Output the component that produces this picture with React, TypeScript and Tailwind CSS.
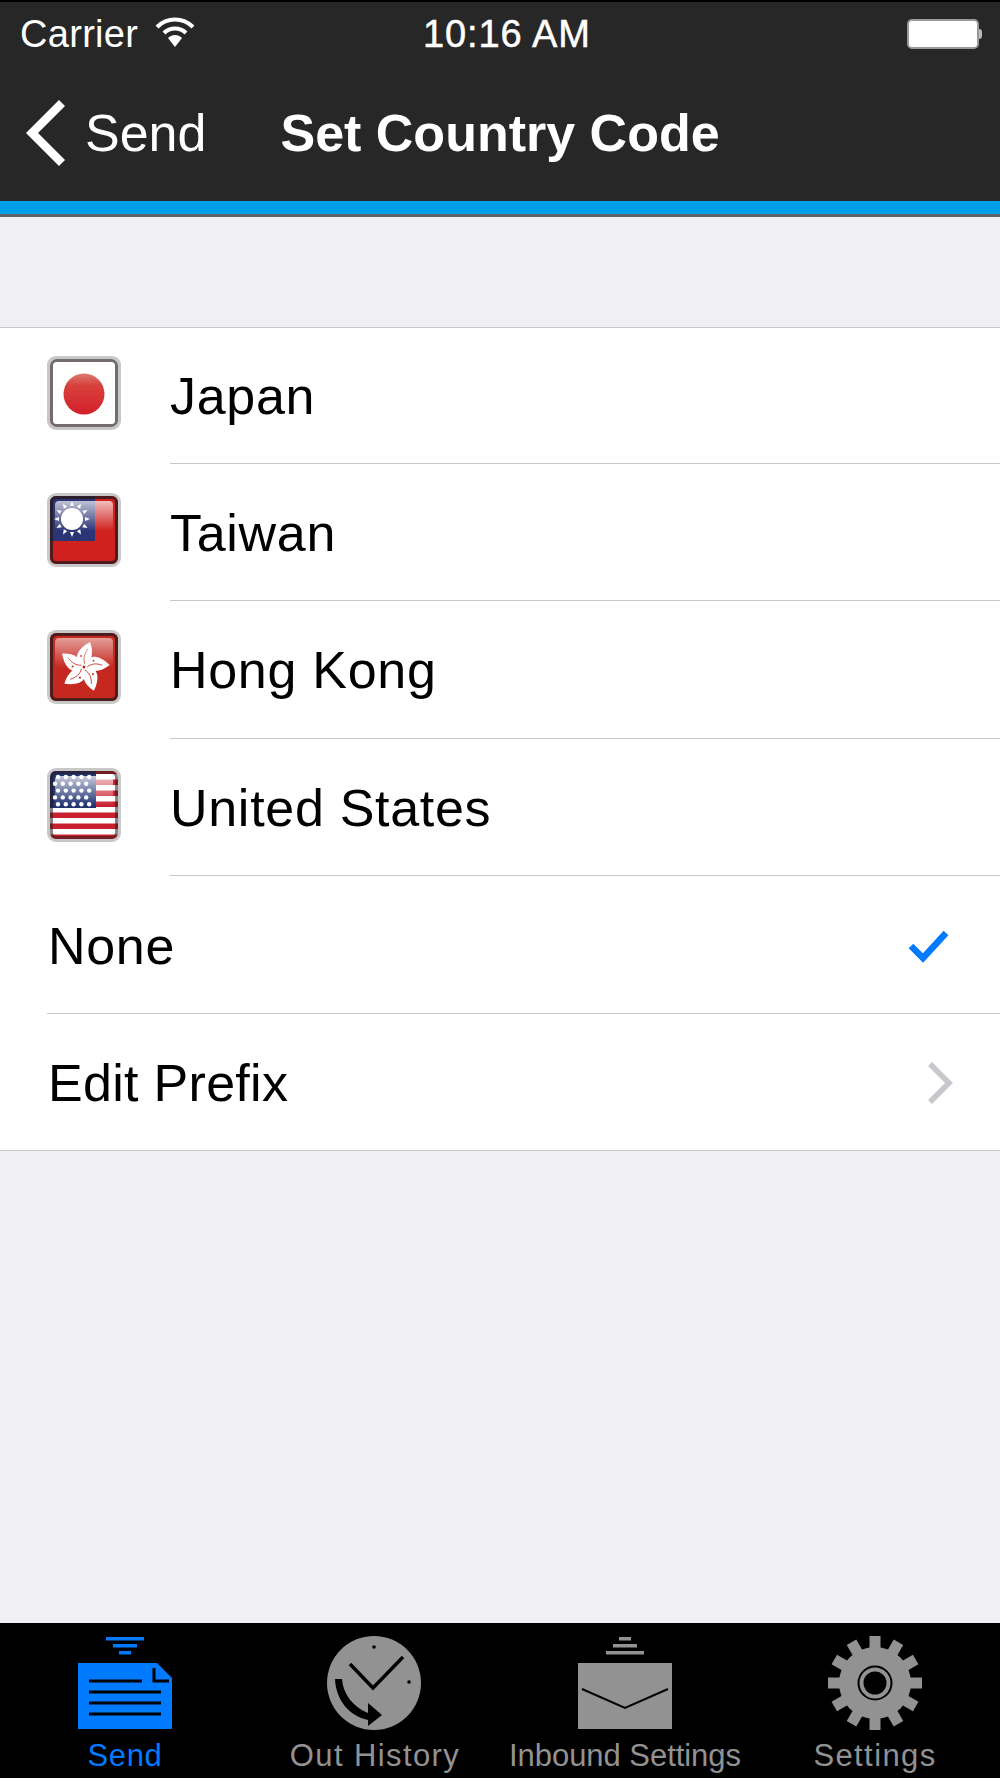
import type { ReactNode } from "react";

const FONT = "font-['Liberation_Sans',Arial,sans-serif]";

/** Rounded glossy frame shared by all four flags. */
function FlagFrame({ id, children, gloss = 0.7, edge = 0.8 }: { id: string; children: ReactNode; gloss?: number; edge?: number }) {
  return (
    <svg width="74" height="74" viewBox="0 0 74 74" className="mb-[6px] shrink-0 blur-[0.7px]">
      <defs>
        <clipPath id={`${id}-clip`}>
          <rect x="3" y="3" width="68" height="68" rx="6" />
        </clipPath>
        <linearGradient id={`${id}-gloss`} x1="0" y1="0" x2="0" y2="1">
          <stop offset="0" stopColor="#fff" stopOpacity={gloss} />
          <stop offset="1" stopColor="#fff" stopOpacity="0" />
        </linearGradient>
      </defs>
      <rect x="0" y="0" width="74" height="74" rx="9" fill="#c8c8c8" />
      <g clipPath={`url(#${id}-clip)`}>
        {children}
        <rect x="8" y="8" width="58" height="30" rx="4" fill={`url(#${id}-gloss)`} />
      </g>
      <rect x="4.5" y="4.5" width="65" height="65" rx="5" fill="none" stroke="#2a1c1c" strokeOpacity={edge} strokeWidth="3" />
    </svg>
  );
}

function JapanFlag() {
  return (
    <FlagFrame id="jp" gloss={0} edge={0.65}>
      <rect width="74" height="74" fill="#fff" />
      <defs>
        <linearGradient id="jp-sun" x1="0" y1="0" x2="0" y2="1">
          <stop offset="0" stopColor="#dc7a72" />
          <stop offset="0.3" stopColor="#d8403c" />
          <stop offset="1" stopColor="#d31f2c" />
        </linearGradient>
      </defs>
      <circle cx="37" cy="38" r="20.5" fill="url(#jp-sun)" />
    </FlagFrame>
  );
}

function TaiwanFlag() {
  const rays = Array.from({ length: 12 }, (_, i) => i * 30);
  return (
    <FlagFrame id="tw">
      <rect width="74" height="74" fill="#d0211f" />
      <rect width="48" height="48" fill="#2b3576" />
      {rays.map((deg) => (
        <polygon key={deg} points="23,13 27,13 25,8" fill="#fff" transform={`rotate(${deg} 25 26)`} />
      ))}
      <circle cx="25" cy="26" r="11" fill="#fff" />
    </FlagFrame>
  );
}

function HongKongFlag() {
  const petals = [0, 72, 144, 216, 288];
  return (
    <FlagFrame id="hk" gloss={0.55}>
      <rect width="74" height="74" fill="#c4281f" />
      {petals.map((deg) => (
        <g key={deg} transform={`rotate(${deg} 37 37)`}>
          <path d="M38 36C27 33 26 21 43 12C47 22 45 31 38 36Z" fill="#fff" />
          <path d="M38 34C36 29 37 24 41 19" stroke="#c4281f" strokeWidth="0.8" fill="none" />
          <circle cx="34" cy="26" r="1" fill="#c4281f" />
        </g>
      ))}
    </FlagFrame>
  );
}

function UsFlag() {
  const stripes = Array.from({ length: 7 }, (_, i) => i);
  const stars = Array.from({ length: 5 }, (_, r) => Array.from({ length: 5 }, (_, c) => [c, r]));
  return (
    <FlagFrame id="us" gloss={0.75} edge={0.55}>
      <rect width="74" height="74" fill="#fff" />
      {stripes.map((i) => (
        <rect key={i} y={0.5 + i * 11} width="74" height="5.5" fill="#c8202f" />
      ))}
      <rect width="49" height="40" fill="#1f3272" />
      {stars.flat().map(([c, r]) => (
        <circle key={`${c}-${r}`} cx={8 + c * 7.8 + (r % 2 ? 0 : 3)} cy={9 + r * 6.8} r="2.2" fill="#fff" />
      ))}
    </FlagFrame>
  );
}

function CountryRow({ flag, name, first }: { flag: ReactNode; name: string; first?: boolean }) {
  return (
    <div className={`flex items-center pl-[47px] ${first ? "h-[134.5px] pt-[1px]" : "h-[136.5px] pt-[2px]"}`}>
      {flag}
      <span className="ml-[49px] text-[52px] tracking-[0.7px] text-black">{name}</span>
    </div>
  );
}

function Separator({ inset }: { inset: string }) {
  return <div className={`h-px bg-[#c8c7cc] ${inset}`} />;
}

function SendIcon() {
  return (
    <svg width="100" height="96" viewBox="0 0 100 96">
      <g fill="#007aff">
        <rect x="31" y="3" width="38" height="3.5" />
        <rect x="38" y="10" width="24" height="3.5" />
        <rect x="44" y="17" width="12" height="3.5" />
        <path d="M3 29H82L97 44V95H3Z" />
      </g>
      <g stroke="#000" strokeWidth="3" fill="none">
        <path d="M79 34V47H94" />
        <path d="M14 47H67M14 58H86M14 69H86M14 80H86" />
      </g>
    </svg>
  );
}

function HistoryIcon() {
  return (
    <svg width="100" height="96" viewBox="0 0 100 96">
      <circle cx="49" cy="49" r="47" fill="#929292" />
      <circle cx="49" cy="13" r="1.8" fill="#000" />
      <circle cx="84" cy="48" r="1.8" fill="#000" />
      <path d="M25 30L48 54L78 23" stroke="#000" strokeWidth="3.5" fill="none" />
      <path d="M10 45H17C18 60 28 73 43 79V86C24 82 11 66 10 45Z" fill="#000" />
      <path d="M43 69L57 81L43 92Z" fill="#000" />
    </svg>
  );
}

function InboundIcon() {
  return (
    <svg width="100" height="96" viewBox="0 0 100 96">
      <g fill="#929292">
        <rect x="44" y="3" width="12" height="3.5" />
        <rect x="38" y="10" width="24" height="3.5" />
        <rect x="31" y="17" width="38" height="3.5" />
        <rect x="3" y="29" width="94" height="66" />
      </g>
      <path d="M7 55L50 74L93 55" stroke="#000" strokeWidth="2" fill="none" />
    </svg>
  );
}

function GearIcon() {
  const teeth = Array.from({ length: 12 }, (_, i) => i * 30);
  return (
    <svg width="100" height="96" viewBox="0 0 100 96">
      <g fill="#929292">
        {teeth.map((deg) => (
          <rect key={deg} x="44.5" y="2" width="11" height="20" transform={`rotate(${deg} 50 49)`} />
        ))}
        <circle cx="50" cy="49" r="36" />
      </g>
      <circle cx="50" cy="49" r="16.5" fill="none" stroke="#000" strokeWidth="2" />
      <circle cx="50" cy="49" r="11.5" fill="#000" />
    </svg>
  );
}

function TabItem({ icon, label, active, tracking }: { icon: ReactNode; label: string; active?: boolean; tracking: string }) {
  return (
    <div className="flex flex-col items-center pt-[11px]">
      {icon}
      <span className={`mt-[8px] whitespace-nowrap text-[31px] leading-[36px] ${tracking} ${active ? "text-[#007aff]" : "text-[#929292]"}`}>
        {label}
      </span>
    </div>
  );
}

export default function App() {
  return (
    <div className={`flex h-[1778px] w-[1000px] flex-col overflow-hidden bg-[#efeff4] ${FONT}`}>
      <header className="shrink-0 border-t-2 border-black bg-[#272727] text-white">
        <div className="relative flex h-[64px] items-center pl-[20px] text-[38px]">
          <span className="tracking-[0.3px]">Carrier</span>
          <svg width="40" height="30" viewBox="0 0 40 30" className="mb-[4px] ml-[17px]">
            <path d="M2 10C12 0 28 0 38 10" stroke="#fff" strokeWidth="4" fill="none" />
            <path d="M9 16C15 10 25 10 31 16" stroke="#fff" strokeWidth="4" fill="none" />
            <path d="M13 21C17 17 23 17 27 21L20 30Z" fill="#fff" />
          </svg>
          <span className="absolute left-[423px] tracking-[0.9px] [-webkit-text-stroke:0.5px_white]">10:16 AM</span>
          <div className="ml-auto mr-[18px] flex items-center">
            <div className="h-[30px] w-[72px] rounded-[5px] border-2 border-[#9a9a9a] bg-white" />
            <div className="h-[10px] w-[3px] rounded-r-full bg-[#bbbbbb]" />
          </div>
        </div>
        <div className="flex h-[135px] items-center pb-[2px] pl-[26px]">
          <svg width="40" height="66" viewBox="0 0 40 66" className="shrink-0">
            <path d="M36 3L6 33L36 63" stroke="#fff" strokeWidth="8.5" fill="none" />
          </svg>
          <span className="ml-[19px] text-[52px]">Send</span>
          <span className="ml-[74px] text-[52px] font-bold">Set Country Code</span>
        </div>
      </header>
      <div className="h-[13px] shrink-0 bg-[#009fe8]" />
      <div className="h-[3px] shrink-0 bg-[#5f6468]" />

      <main className="flex-1 pt-[110px]">
        <section className="border-y border-[#c8c7cc] bg-white">
          <CountryRow flag={<JapanFlag />} name="Japan" first />
          <Separator inset="ml-[170px]" />
          <CountryRow flag={<TaiwanFlag />} name="Taiwan" />
          <Separator inset="ml-[170px]" />
          <CountryRow flag={<HongKongFlag />} name="Hong Kong" />
          <Separator inset="ml-[170px]" />
          <CountryRow flag={<UsFlag />} name="United States" />
          <Separator inset="ml-[170px]" />
          <div className="flex h-[136.5px] items-center justify-between pl-[48px] pr-[50px] pt-[3px]">
            <span className="text-[52px] tracking-[0.7px] text-black">None</span>
            <svg width="42" height="36" viewBox="0 0 42 36">
              <path d="M3 18L15 30L38 5" stroke="#007aff" strokeWidth="6.5" fill="none" />
            </svg>
          </div>
          <Separator inset="ml-[47px]" />
          <div className="flex h-[136.5px] items-center justify-between pl-[48px] pr-[47px] pt-[2px]">
            <span className="text-[52px] tracking-[0.3px] text-black">Edit Prefix</span>
            <svg width="26" height="42" viewBox="0 0 26 42">
              <path d="M3 2L22 21L3 40" stroke="#c7c7cc" strokeWidth="5.5" fill="none" />
            </svg>
          </div>
        </section>
      </main>

      <nav className="grid h-[155px] shrink-0 grid-cols-4 bg-black">
        <TabItem icon={<SendIcon />} label="Send" tracking="tracking-[0.6px]" active />
        <TabItem icon={<HistoryIcon />} label="Out History" tracking="tracking-[1.4px]" />
        <TabItem icon={<InboundIcon />} label="Inbound Settings" tracking="tracking-[-0.05px]" />
        <TabItem icon={<GearIcon />} label="Settings" tracking="tracking-[1.4px]" />
      </nav>
    </div>
  );
}
